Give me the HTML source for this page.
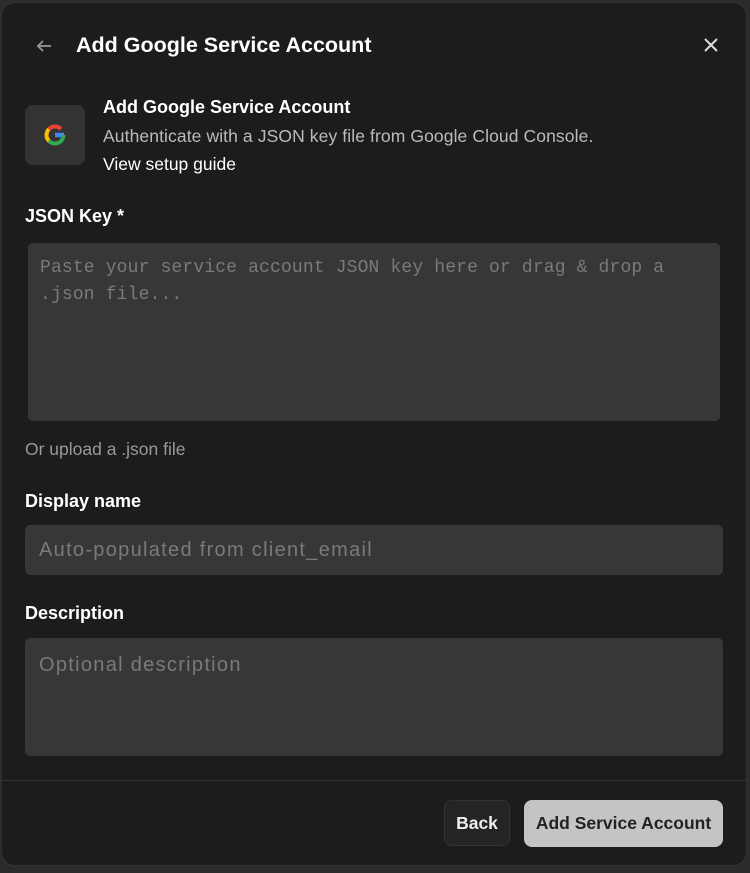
<!DOCTYPE html>
<html><head><style>
body{margin:0;width:750px;height:873px;background:#2b2b2b;font-family:"Liberation Sans",sans-serif;overflow:hidden}
.d{position:absolute;left:1px;top:2px;width:746px;height:864px;background:#1c1c1c;border-radius:14px;border:1px solid #333;box-sizing:border-box;overflow:hidden}
.a{position:absolute;color:#fff;white-space:nowrap}
.in{position:absolute;background:#373737;border-radius:5px;color:#7a7a7a}
</style></head><body>
<div class="d">
<svg class="a" style="left:32px;top:34px" width="20" height="18" viewBox="0 0 20 18"><path d="M17 9H4M9 4L4 9l5 5" stroke="#999" stroke-width="1.8" fill="none"/></svg>
<div class="a" style="left:74px;top:30px;font-size:21.5px;font-weight:bold">Add Google Service Account</div>
<svg class="a" style="left:701px;top:34px" width="16" height="16" viewBox="0 0 16 16"><path d="M2 2L14 14M14 2L2 14" stroke="#ddd" stroke-width="2"/></svg>
<div style="position:absolute;left:23px;top:102px;width:60px;height:60px;background:#333;border-radius:8px"></div>
<svg style="position:absolute;left:41px;top:120px" width="24" height="24" viewBox="0 0 24 24">
<path d="M12 12h9" stroke="#4285f4" stroke-width="4.5" fill="none"/>
<path d="M20.5 12A8.5 8.5 0 0 1 5.9 17.9" stroke="#34a853" stroke-width="4" fill="none"/>
<path d="M5.9 17.9A8.5 8.5 0 0 1 5.9 6.1" stroke="#fbbc05" stroke-width="4" fill="none"/>
<path d="M5.9 6.1A8.5 8.5 0 0 1 18 6" stroke="#ea4335" stroke-width="4" fill="none"/>
</svg>
<div class="a" style="left:101px;top:94px;font-size:18px;font-weight:bold">Add Google Service Account</div>
<div class="a" style="left:101px;top:123px;font-size:17.5px;color:#bbb;letter-spacing:0.1px">Authenticate with a JSON key file from Google Cloud Console.</div>
<div class="a" style="left:101px;top:151px;font-size:17.5px">View setup guide</div>
<div class="a" style="left:23px;top:203px;font-size:18px;font-weight:bold">JSON Key *</div>
<div class="in" style="left:26px;top:240px;width:692px;height:178px;font-family:'Liberation Mono',monospace;font-size:18px;letter-spacing:0.15px;line-height:27px;padding:12px;box-sizing:border-box">Paste your service account JSON key here or drag &amp; drop a .json file...</div>
<div class="a" style="left:23px;top:436px;font-size:17.5px;color:#999">Or upload a .json file</div>
<div class="a" style="left:23px;top:488px;font-size:18px;font-weight:bold">Display name</div>
<div class="in" style="left:23px;top:522px;width:698px;height:50px;font-size:20px;letter-spacing:1.3px;line-height:50px;padding-left:14px;box-sizing:border-box">Auto-populated from client_email</div>
<div class="a" style="left:23px;top:600px;font-size:18px;font-weight:bold">Description</div>
<div class="in" style="left:23px;top:635px;width:698px;height:118px;font-size:20px;letter-spacing:1.3px;padding:16px 14px;box-sizing:border-box">Optional description</div>
<div style="position:absolute;left:0;top:777px;width:746px;height:1px;background:#333"></div>
<div style="position:absolute;left:442px;top:797px;width:66px;height:46px;background:#242424;border:1px solid #333;border-radius:8px;box-sizing:border-box;color:#eee;font-size:17.5px;font-weight:bold;line-height:44px;text-align:center">Back</div>
<div style="position:absolute;left:522px;top:797px;width:199px;height:47px;background:#c4c4c4;border-radius:8px;color:#222;font-size:17.5px;font-weight:bold;line-height:47px;text-align:center">Add Service Account</div>
</div>
</body></html>
